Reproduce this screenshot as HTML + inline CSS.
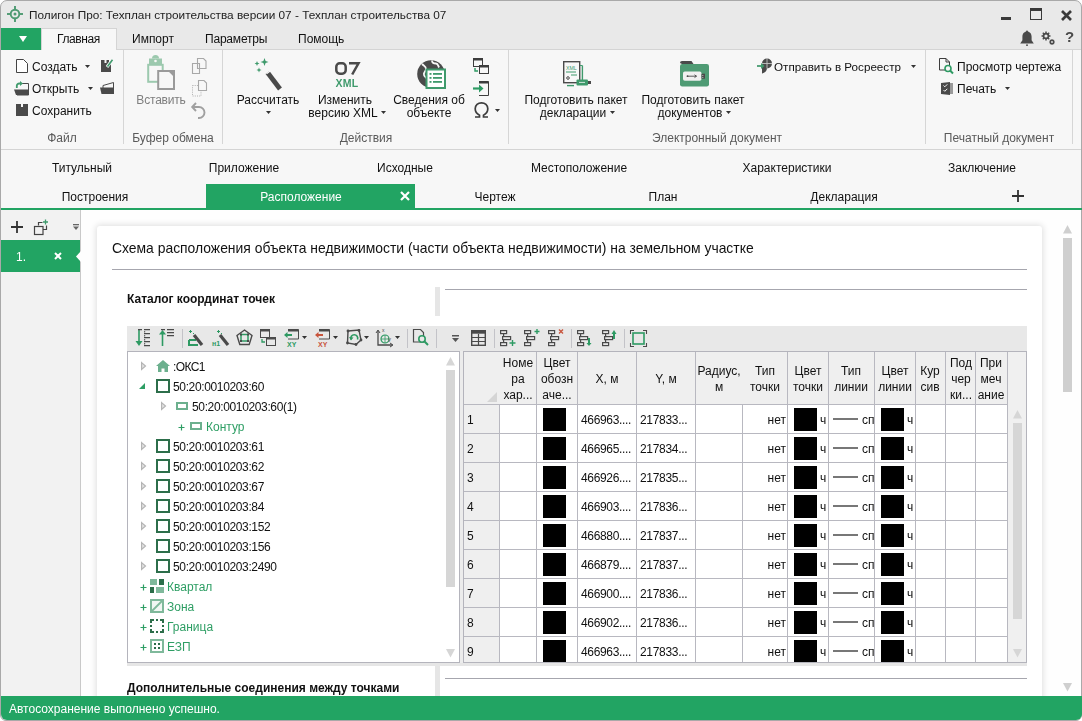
<!DOCTYPE html><html><head><meta charset="utf-8"><style>
*{margin:0;padding:0;box-sizing:border-box}
html,body{width:1082px;height:721px;overflow:hidden;background:#fff}
body{font-family:"Liberation Sans",sans-serif;font-size:12px;color:#111;position:relative}
.t{position:absolute;white-space:nowrap;line-height:16px;will-change:transform}
.c{transform:translateX(-50%)}
.g{color:#5a5a5a}
.b{font-weight:bold}
svg{overflow:visible}
</style></head><body>
<div style="position:absolute;left:0px;top:0px;width:1082px;height:721px;background:#fff"></div>
<div style="position:absolute;left:0px;top:0px;width:1082px;height:721px;background:#e9e9e9;border:1px solid #a9a9a9;border-radius:7px 7px 6px 6px;overflow:hidden"></div>
<div style="position:absolute;left:1px;top:49px;width:1080px;height:101px;background:#f7f7f7;border-top:1px solid #d4d4d4;border-bottom:1px solid #d4d4d4"></div>
<div style="position:absolute;left:1px;top:150px;width:1080px;height:58px;background:#f7f7f7"></div>
<div style="position:absolute;left:1px;top:208px;width:1081px;height:2px;background:#22a463"></div>
<div style="position:absolute;left:1px;top:210px;width:80px;height:486px;background:#f2f2f2;border-right:1px solid #c9c9c9"></div>
<div style="position:absolute;left:81px;top:210px;width:1000px;height:486px;background:#fefefe"></div>
<div style="position:absolute;left:97px;top:226px;width:945px;height:480px;background:#fff;border-radius:3px;box-shadow:0 0 6px 1px rgba(0,0,0,0.13)"></div>
<div style="position:absolute;left:1px;top:696px;width:1081px;height:24px;background:#22a463;border-radius:0 0 6px 6px"></div>
<svg style="position:absolute;left:7px;top:6px" width="16" height="16" viewBox="0 0 16 16"><g stroke="#4e9a72" stroke-width="1.9" fill="none"><circle cx="8" cy="8" r="4.3"/><line x1="8" y1="0" x2="8" y2="3.3"/><line x1="8" y1="12.7" x2="8" y2="16"/><line x1="0" y1="8" x2="3.3" y2="8"/><line x1="12.7" y1="8" x2="16" y2="8"/></g><circle cx="8" cy="8" r="1.5" fill="#4e9a72"/></svg>
<div class="t " style="left:29px;top:7px;font-size:11.8px;color:#222">Полигон Про: Техплан строительства версии 07 - Техплан строительства 07</div>
<div style="position:absolute;left:1001px;top:17px;width:10px;height:2.5px;background:#3a3a3a"></div>
<div style="position:absolute;left:1030px;top:8px;width:12px;height:12px;border:1.5px solid #3a3a3a;border-top-width:3px"></div>
<svg style="position:absolute;left:1061px;top:10px" width="11" height="11" viewBox="0 0 11 11"><path d="M1 1L10 10M10 1L1 10" stroke="#3a3a3a" stroke-width="2.7"/></svg>
<svg style="position:absolute;left:1019px;top:30px" width="16" height="16" viewBox="0 0 16 16"><path d="M8 1.5c-3 0-4.6 2.4-4.6 5.2v3.6L1.2 13.4h13.6L12.6 10.3V6.7C12.6 3.9 11 1.5 8 1.5z" fill="#4a4a4a"/><circle cx="8" cy="1.4" r="1" fill="#4a4a4a"/><rect x="7" y="14.5" width="2" height="1.3" fill="#4a4a4a"/></svg>
<svg style="position:absolute;left:1041px;top:31px" width="15" height="15" viewBox="0 0 15 15"><g fill="#4a4a4a"><circle cx="5" cy="5" r="3.3"/><g stroke="#4a4a4a" stroke-width="1.5"><path d="M5 0.5v9M0.5 5h9M1.8 1.8l6.4 6.4M8.2 1.8l-6.4 6.4"/></g><circle cx="11" cy="11" r="2.2"/><g stroke="#4a4a4a" stroke-width="1.1"><path d="M11 8v6M8 11h6M8.9 8.9l4.2 4.2M13.1 8.9l-4.2 4.2"/></g></g><circle cx="5" cy="5" r="1.6" fill="#e9e9e9"/><circle cx="11" cy="11" r="0.9" fill="#e9e9e9"/></svg>
<div class="t " style="left:1065px;top:29px;font-size:15px;font-weight:bold;color:#4a4a4a">?</div>
<div style="position:absolute;left:1px;top:28px;width:40px;height:22px;background:#22a463"></div>
<svg style="position:absolute;left:19px;top:36px" width="8" height="6" viewBox="0 0 8 6"><path d="M0 0H8L4 6z" fill="#fff"/></svg>
<div style="position:absolute;left:41px;top:28px;width:76px;height:22px;background:#f7f7f7;border:1px solid #d4d4d4;border-bottom:none"></div>
<div class="t " style="left:57px;top:31px;letter-spacing:-0.4px">Главная</div>
<div class="t " style="left:132px;top:31px;">Импорт</div>
<div class="t " style="left:205px;top:31px;letter-spacing:-0.2px">Параметры</div>
<div class="t " style="left:298px;top:31px;">Помощь</div>
<div style="position:absolute;left:123px;top:50px;width:1px;height:94px;background:#d6d6d6"></div>
<div style="position:absolute;left:222px;top:50px;width:1px;height:94px;background:#d6d6d6"></div>
<div style="position:absolute;left:508px;top:50px;width:1px;height:94px;background:#d6d6d6"></div>
<div style="position:absolute;left:925px;top:50px;width:1px;height:94px;background:#d6d6d6"></div>
<div style="position:absolute;left:1072px;top:50px;width:1px;height:94px;background:#d6d6d6"></div>
<div class="t g c" style="left:62px;top:130px;">Файл</div>
<div class="t g c" style="left:173px;top:130px;">Буфер обмена</div>
<div class="t g c" style="left:366px;top:130px;">Действия</div>
<div class="t g c" style="left:717px;top:130px;">Электронный документ</div>
<div class="t g c" style="left:999px;top:130px;">Печатный документ</div>
<svg style="position:absolute;left:15px;top:59px" width="14" height="14" viewBox="0 0 14 14"><path d="M1.5 0.5H8.5L12.5 4.5V13.5H1.5z" fill="#fff" stroke="#444"/></svg>
<div class="t " style="left:32px;top:59px;">Создать</div>
<svg style="position:absolute;left:85px;top:65px" width="5" height="3" viewBox="0 0 5 3"><path d="M0 0H5L2.5 3z" fill="#333"/></svg>
<svg style="position:absolute;left:101px;top:59px" width="12" height="13" viewBox="0 0 12 13"><path d="M0 1H8V4H10V13H0z" fill="#4a4a4a"/><rect x="3.5" y="1" width="2" height="3" fill="#f7f7f7"/><path d="M6 8L11.5 0.5" stroke="#f7f7f7" stroke-width="3"/><path d="M6.5 7.5L11.5 0.8" stroke="#3f9a6c" stroke-width="1.6"/></svg>
<svg style="position:absolute;left:14px;top:81px" width="15" height="14" viewBox="0 0 15 14"><path d="M7.5 2.5H14.5V14H3" fill="none" stroke="#4a4a4a" stroke-width="1"/><path d="M0 8.5H14.5V14H2z" fill="#4a4a4a"/><path d="M2.8 7V4.8Q2.8 2.5 5.5 2.5H7" stroke="#3f9a6c" stroke-width="1.8" fill="none"/><path d="M6 0L9 2.5L6 5z" fill="#3f9a6c"/></svg>
<div class="t " style="left:32px;top:81px;">Открыть</div>
<svg style="position:absolute;left:88px;top:87px" width="5" height="3" viewBox="0 0 5 3"><path d="M0 0H5L2.5 3z" fill="#333"/></svg>
<svg style="position:absolute;left:100px;top:82px" width="14" height="12" viewBox="0 0 14 12"><path d="M3 3.5L13.5 0.5V11.5H3z" fill="none" stroke="#4a4a4a"/><path d="M0 5.5H14V12H1.5z" fill="#4a4a4a"/></svg>
<svg style="position:absolute;left:16px;top:104px" width="12" height="12" viewBox="0 0 12 12"><path d="M0 0H12V12H0z" fill="#4a4a4a"/><rect x="5" y="0" width="2" height="3" fill="#f7f7f7"/></svg>
<div class="t " style="left:32px;top:103px;">Сохранить</div>
<svg style="position:absolute;left:146px;top:57px" width="30" height="34" viewBox="0 0 30 34"><rect x="2.2" y="7.8" width="14.5" height="17" fill="none" stroke="#9cc9ae" stroke-width="2"/><path d="M3 1.5H16V7.8H3z" fill="#9cc9ae"/><path d="M6 1.5a3.5 3.5 0 0 1 7 0z" fill="#9cc9ae"/><circle cx="9.5" cy="4" r="1.3" fill="#f7f7f7"/><path d="M12.2 14H23.5L28 18.5V32H12.2z" fill="#f7f7f7" stroke="#9a9a9a" stroke-width="2"/><path d="M23 13H29V19z" fill="#9a9a9a"/></svg>
<div class="t c" style="left:161px;top:92px;color:#7f7f7f;letter-spacing:-0.2px">Вставить</div>
<svg style="position:absolute;left:192px;top:58px" width="15" height="16" viewBox="0 0 15 16"><path d="M5.5 0.5H11.5L14 3V10.5H5.5z" fill="#f7f7f7" stroke="#a8a8a8" stroke-width="1.1"/><path d="M0.5 5.5H7.5V15.5H0.5z" fill="#f7f7f7" stroke="#a8a8a8" stroke-width="1.1"/><path d="M5.5 5.5V10.5H7.5" fill="none" stroke="#a8a8a8" stroke-width="1.1"/></svg>
<svg style="position:absolute;left:192px;top:80px" width="15" height="17" viewBox="0 0 15 17"><rect x="0.5" y="5.5" width="8.5" height="10.5" fill="none" stroke="#b0b0b0" stroke-width="1" stroke-dasharray="1 1.2"/><path d="M6.5 0.5H12L14.5 3V10.5H6.5z" fill="#f7f7f7" stroke="#a8a8a8" stroke-width="1.1"/></svg>
<svg style="position:absolute;left:191px;top:102px" width="16" height="16" viewBox="0 0 16 16"><path d="M5 1L1.2 5L5 9" fill="none" stroke="#a0a0a0" stroke-width="1.9"/><path d="M1.5 5H8a5.5 5.5 0 0 1 0 11H7" fill="none" stroke="#a0a0a0" stroke-width="1.9"/></svg>
<svg style="position:absolute;left:254px;top:58px" width="30" height="33" viewBox="0 0 30 33"><g fill="#3f9a6c"><path d="M10.5 0L11.6 2.9L14.5 4L11.6 5.1L10.5 8L9.4 5.1L6.5 4L9.4 2.9z"/><path d="M3 3L3.7 4.8L5.5 5.5L3.7 6.2L3 8L2.3 6.2L0.5 5.5L2.3 4.8z"/><path d="M5 9.5L5.7 11.3L7.5 12L5.7 12.7L5 14.5L4.3 12.7L2.5 12L4.3 11.3z"/></g><path d="M13.5 14.5L26 31" stroke="#4a4a4a" stroke-width="4.8"/><path d="M12.5 15.8L16.5 12.8" stroke="#f7f7f7" stroke-width="1.3"/></svg>
<div class="t c" style="left:268px;top:92px;">Рассчитать</div>
<svg style="position:absolute;left:266px;top:111px" width="5" height="3" viewBox="0 0 5 3"><path d="M0 0H5L2.5 3z" fill="#333"/></svg>
<svg style="position:absolute;left:335px;top:62px" width="25" height="13" viewBox="0 0 25 13"><rect x="1.3" y="1.3" width="9.4" height="10.4" rx="3.4" fill="none" stroke="#4a4a4a" stroke-width="2.5"/><path d="M14 1.3H23.5L17.2 12.5" fill="none" stroke="#4a4a4a" stroke-width="2.5"/></svg>
<div class="t c" style="left:347px;top:78px;font-size:10.5px;font-weight:bold;color:#3f9a6c;line-height:11px;letter-spacing:0.3px">XML</div>
<div class="t c" style="left:345px;top:92px;">Изменить</div>
<div class="t c" style="left:342.5px;top:105px;">версию XML</div>
<svg style="position:absolute;left:381px;top:111px" width="5" height="3" viewBox="0 0 5 3"><path d="M0 0H5L2.5 3z" fill="#333"/></svg>
<svg style="position:absolute;left:417px;top:60px" width="29" height="29" viewBox="0 0 29 29"><circle cx="14" cy="14" r="13.8" fill="#4a4a4a"/><path d="M5 4c2 2 4 2 4 5s-3 3-2 6 3 2 3 5M15 0.5c0 2 2 3 4 3s2 2 3 4" stroke="#f7f7f7" stroke-width="1.8" fill="none"/><rect x="9.5" y="9.5" width="18.5" height="18.5" fill="#fff" stroke="#3f9a6c" stroke-width="2"/><g fill="#3f9a6c"><rect x="12.5" y="13" width="2" height="1.8"/><rect x="16" y="13" width="9" height="1.8"/><rect x="12.5" y="17" width="2" height="1.8"/><rect x="16" y="17" width="9" height="1.8"/><rect x="12.5" y="21" width="2" height="1.8"/><rect x="16" y="21" width="9" height="1.8"/></g></svg>
<div class="t c" style="left:429px;top:92px;">Сведения об</div>
<div class="t c" style="left:429px;top:105px;">объекте</div>
<svg style="position:absolute;left:473px;top:58px" width="16" height="16" viewBox="0 0 16 16"><rect x="0.5" y="0.5" width="9" height="8" fill="none" stroke="#3d3d3d"/><rect x="0.5" y="0.5" width="9" height="2" fill="#3d3d3d"/><rect x="6.5" y="7.5" width="9" height="8" fill="#f7f7f7" stroke="#3d3d3d"/><rect x="6.5" y="7.5" width="9" height="2" fill="#3d3d3d"/><path d="M2 10v3h3" stroke="#2e9a63" stroke-width="1.4" fill="none"/></svg>
<svg style="position:absolute;left:473px;top:81px" width="16" height="15" viewBox="0 0 16 15"><path d="M6 0.5H15.5V14.5H6" fill="none" stroke="#3d3d3d"/><rect x="6" y="0.5" width="9.5" height="2" fill="#3d3d3d"/><path d="M0 7.5H7" stroke="#2e9a63" stroke-width="2.2"/><path d="M6 3.5L10.5 7.5L6 11.5z" fill="#2e9a63"/></svg>
<svg style="position:absolute;left:474px;top:102px" width="15" height="16" viewBox="0 0 15 16"><path d="M1 15H5.5V13.2C2.8 11.8 1.2 9.4 1.2 6.8 1.2 3.2 4 0.8 7.5 0.8S13.8 3.2 13.8 6.8C13.8 9.4 12.2 11.8 9.5 13.2V15H14" fill="none" stroke="#3d3d3d" stroke-width="1.7"/></svg>
<svg style="position:absolute;left:495px;top:109px" width="5" height="3" viewBox="0 0 5 3"><path d="M0 0H5L2.5 3z" fill="#333"/></svg>
<svg style="position:absolute;left:562px;top:60px" width="30" height="28" viewBox="0 0 30 28"><rect x="1.7" y="1.7" width="16" height="21" fill="#f7f7f7" stroke="#4a4a4a" stroke-width="1.4"/><path d="M20.4 5.5V23" stroke="#3f9a6c" stroke-width="1.4"/><path d="M18 5.5H20.4" stroke="#3f9a6c" stroke-width="1"/><path d="M5 25.6H12" stroke="#3f9a6c" stroke-width="1.4"/><text x="4" y="9.6" font-size="5.2" fill="#3f9a6c" font-family="Liberation Sans">XML</text><path d="M4 12H14M9 15H15" stroke="#3f9a6c" stroke-width="1"/><circle cx="6" cy="18" r="1.3" fill="none" stroke="#4a4a4a" stroke-width="1"/><rect x="14.5" y="19.4" width="11.5" height="6" rx="1" fill="#3f9a6c"/><rect x="26" y="21" width="3" height="3" fill="#4a4a4a"/><path d="M17 22.4h6" stroke="#f7f7f7" stroke-width="0.8"/></svg>
<div class="t c" style="left:576px;top:92px;">Подготовить пакет</div>
<div class="t c" style="left:573px;top:105px;">декларации</div>
<svg style="position:absolute;left:610px;top:111px" width="5" height="3" viewBox="0 0 5 3"><path d="M0 0H5L2.5 3z" fill="#333"/></svg>
<svg style="position:absolute;left:680px;top:61px" width="29" height="26" viewBox="0 0 29 26"><path d="M0 2a2 2 0 0 1 2-2h9.5l2 3H2z" fill="#4a4a4a"/><rect x="0" y="3" width="29" height="22.4" rx="2.2" fill="#4f9b74"/><rect x="3" y="10.5" width="18.5" height="9.3" rx="1.8" fill="#f0f0f0"/><rect x="21.5" y="12.7" width="3.5" height="5" fill="#4a4a4a"/><path d="M22.8 14v0.8M22.8 16v0.8" stroke="#f0f0f0" stroke-width="0.9"/><path d="M7.5 15.2h9M14.5 13.8l2 1.4-2 1.4" stroke="#4a4a4a" stroke-width="0.9" fill="none"/><circle cx="7.5" cy="15.2" r="0.9" fill="#4a4a4a"/></svg>
<div class="t c" style="left:693px;top:92px;">Подготовить пакет</div>
<div class="t c" style="left:690px;top:105px;">документов</div>
<svg style="position:absolute;left:726px;top:111px" width="5" height="3" viewBox="0 0 5 3"><path d="M0 0H5L2.5 3z" fill="#333"/></svg>
<svg style="position:absolute;left:756px;top:58px" width="17" height="17" viewBox="0 0 17 17"><path d="M6 5.5A5 5 0 1 1 11 10.5Q10.5 14.5 6 15.5z" fill="#4a4a4a"/><path d="M11 0.5V10.5M6 5.5H16" stroke="#f7f7f7" stroke-width="0.9" opacity="0.7"/><path d="M1 8H6" stroke="#5aa57f" stroke-width="2"/><path d="M5 5L8.5 8L5 11z" fill="#3f9a6c"/></svg>
<div class="t " style="left:774px;top:59px;font-size:11.65px">Отправить в Росреестр</div>
<svg style="position:absolute;left:911px;top:65px" width="5" height="3" viewBox="0 0 5 3"><path d="M0 0H5L2.5 3z" fill="#333"/></svg>
<svg style="position:absolute;left:939px;top:58px" width="15" height="16" viewBox="0 0 15 16"><path d="M0.5 0.5H7L10.5 4V12H0.5z" fill="none" stroke="#3d3d3d"/><path d="M7 0.5V4H10.5" fill="none" stroke="#3d3d3d"/><circle cx="9" cy="10.5" r="3" fill="#f7f7f7" stroke="#2e9a63" stroke-width="1.6"/><path d="M11 12.5L14 15.5" stroke="#2e9a63" stroke-width="2"/></svg>
<div class="t " style="left:957px;top:59px;">Просмотр чертежа</div>
<svg style="position:absolute;left:941px;top:82px" width="13" height="13" viewBox="0 0 13 13"><path d="M0 1L9 0V13L0 12z" fill="#4a4a4a"/><rect x="9" y="1" width="3" height="11" fill="#9a9a9a"/><path d="M2.5 3.5l1.3 1.3 2.5-2.5M2.5 8l1.3 1.3 2.5-2.5" stroke="#f7f7f7" stroke-width="1" fill="none"/></svg>
<div class="t " style="left:957px;top:81px;">Печать</div>
<svg style="position:absolute;left:1005px;top:87px" width="5" height="3" viewBox="0 0 5 3"><path d="M0 0H5L2.5 3z" fill="#333"/></svg>
<div style="position:absolute;left:206px;top:184px;width:209px;height:24px;background:#22a463"></div>
<div class="t c" style="left:81.5px;top:160px;">Титульный</div>
<div class="t c" style="left:243.5px;top:160px;">Приложение</div>
<div class="t c" style="left:405px;top:160px;">Исходные</div>
<div class="t c" style="left:579px;top:160px;">Местоположение</div>
<div class="t c" style="left:787px;top:160px;">Характеристики</div>
<div class="t c" style="left:982px;top:160px;">Заключение</div>
<div class="t c" style="left:94.5px;top:189px;">Построения</div>
<div class="t c" style="left:663px;top:189px;">План</div>
<div class="t c" style="left:844px;top:189px;">Декларация</div>
<div class="t c" style="left:494.5px;top:189px;">Чертеж</div>
<div class="t c" style="left:300.5px;top:189px;color:#fff">Расположение</div>
<svg style="position:absolute;left:400px;top:191px" width="10" height="10" viewBox="0 0 10 10"><path d="M1 1L9 9M9 1L1 9" stroke="#fff" stroke-width="2.2"/></svg>
<svg style="position:absolute;left:1012px;top:190px" width="12" height="12" viewBox="0 0 12 12"><path d="M6 0V12M0 6H12" stroke="#333" stroke-width="1.8"/></svg>
<svg style="position:absolute;left:11px;top:221px" width="12" height="12" viewBox="0 0 12 12"><path d="M6 0V12M0 6H12" stroke="#333" stroke-width="1.8"/></svg>
<svg style="position:absolute;left:33px;top:219px" width="16" height="16" viewBox="0 0 16 16"><path d="M5.5 6.5V3.5H9.5M13.5 6.5V10.5H10" fill="none" stroke="#444" stroke-width="1.2"/><rect x="1.5" y="7.5" width="8.5" height="8" fill="#f2f2f2" stroke="#444" stroke-width="1.2"/><path d="M12.5 0.5V5.5M10 3H15" stroke="#3f9a6c" stroke-width="1.3"/></svg>
<svg style="position:absolute;left:73px;top:224px" width="6" height="6" viewBox="0 0 6 6"><rect x="0" y="0" width="6" height="1.3" fill="#666"/><path d="M0 2.5H6L3 6z" fill="#666"/></svg>
<div style="position:absolute;left:1px;top:240px;width:79px;height:32px;background:#22a463"></div>
<svg style="position:absolute;left:76px;top:251px" width="5" height="11" viewBox="0 0 5 11"><path d="M5 0V11L0 5.5z" fill="#fefefe"/></svg>
<div class="t " style="left:16px;top:249px;color:#fff">1.</div>
<svg style="position:absolute;left:54px;top:252px" width="8" height="8" viewBox="0 0 8 8"><path d="M1 1L7 7M7 1L1 7" stroke="#fff" stroke-width="2"/></svg>
<svg style="position:absolute;left:1063px;top:225px" width="9" height="9" viewBox="0 0 9 9"><path d="M4.5 0L9 8.5H0z" fill="#cfcfcf"/></svg>
<div style="position:absolute;left:1063px;top:238px;width:9px;height:154px;background:#cfcfcf"></div>
<svg style="position:absolute;left:1063px;top:683px" width="9" height="9" viewBox="0 0 9 9"><path d="M0 0H9L4.5 8.5z" fill="#cfcfcf"/></svg>
<div class="t " style="left:112px;top:240px;font-size:13.9px;line-height:16px">Схема расположения объекта недвижимости (части объекта недвижимости) на земельном участке</div>
<div style="position:absolute;left:112px;top:269px;width:915px;height:1px;background:#a6a6ae"></div>
<div class="t b" style="left:127px;top:291px;font-size:12px">Каталог координат точек</div>
<div style="position:absolute;left:435px;top:287px;width:5px;height:29px;background:#e6e6e6"></div>
<div style="position:absolute;left:445px;top:289px;width:582px;height:1px;background:#a6a6ae"></div>
<div style="position:absolute;left:127px;top:326px;width:900px;height:25px;background:#e8e8e8"></div>
<div style="position:absolute;left:182px;top:329px;width:1px;height:19px;background:#c3c3c8"></div>
<div style="position:absolute;left:407px;top:329px;width:1px;height:19px;background:#c3c3c8"></div>
<div style="position:absolute;left:436px;top:329px;width:1px;height:19px;background:#c3c3c8"></div>
<div style="position:absolute;left:494px;top:329px;width:1px;height:19px;background:#c3c3c8"></div>
<div style="position:absolute;left:571px;top:329px;width:1px;height:19px;background:#c3c3c8"></div>
<div style="position:absolute;left:624px;top:329px;width:1px;height:19px;background:#c3c3c8"></div>
<svg style="position:absolute;left:135px;top:329px" width="16" height="18" viewBox="0 0 16 18"><path d="M4 1V15" stroke="#2e9a63" stroke-width="1.6"/><path d="M0.5 12L4 17L7.5 12z" fill="#2e9a63"/><g stroke="#4a4a4a" stroke-width="1.2"><path d="M3 0.6H7M9 0.6H15M9 4.6H15M9 8.6H15M9 12.6H15M9 16.6H15"/></g><g fill="#4a4a4a"><rect x="9" y="2.2" width="1.2" height="1.2"/><rect x="9" y="6.2" width="1.2" height="1.2"/><rect x="9" y="10.2" width="1.2" height="1.2"/><rect x="9" y="14.2" width="1.2" height="1.2"/></g></svg>
<svg style="position:absolute;left:160px;top:329px" width="15" height="18" viewBox="0 0 15 18"><path d="M2.5 3V17" stroke="#2e9a63" stroke-width="1.6"/><path d="M-1 5.5L2.5 1L6 5.5z" fill="#2e9a63"/><g stroke="#4a4a4a" stroke-width="1.2"><path d="M1 0.6H5M7 0.6H14M7 3.6H14M7 6.6H14"/></g></svg>
<svg style="position:absolute;left:188px;top:329px" width="15" height="18" viewBox="0 0 15 18"><g fill="#2e9a63"><rect x="2" y="1" width="1" height="3"/><rect x="1" y="2" width="3" height="1"/><rect x="5" y="4" width="1" height="1"/></g><path d="M1 11H8M1 11V16H10" stroke="#2e9a63" stroke-width="2" fill="none"/><path d="M6 6L14 16" stroke="#4a4a4a" stroke-width="3.2"/></svg>
<svg style="position:absolute;left:212px;top:329px" width="17" height="18" viewBox="0 0 17 18"><g fill="#2e9a63"><rect x="6" y="1" width="1" height="3"/><rect x="5" y="2" width="3" height="1"/><rect x="9" y="4" width="1" height="1"/></g><text x="0" y="17" font-size="7" font-weight="bold" fill="#2e9a63" font-family="Liberation Sans">н1</text><path d="M8 6L16 16" stroke="#4a4a4a" stroke-width="3.2"/></svg>
<svg style="position:absolute;left:236px;top:329px" width="17" height="17" viewBox="0 0 17 17"><path d="M8.5 1L16 6.5L13.2 15.5H3.8L1 6.5z" fill="none" stroke="#4a4a4a" stroke-width="1.4"/><rect x="5" y="5.5" width="7" height="6.5" fill="none" stroke="#2e9a63" stroke-width="1.5"/><g fill="#4a4a4a"><rect x="4" y="4.5" width="2" height="2"/><rect x="11" y="4.5" width="2" height="2"/><rect x="4" y="11" width="2" height="2"/><rect x="11" y="11" width="2" height="2"/></g></svg>
<svg style="position:absolute;left:260px;top:329px" width="16" height="17" viewBox="0 0 16 17"><rect x="0.5" y="0.5" width="9" height="8" fill="none" stroke="#4a4a4a"/><rect x="0.5" y="0.5" width="9" height="2" fill="#4a4a4a"/><rect x="6.5" y="8.5" width="9" height="8" fill="#e8e8e8" stroke="#4a4a4a"/><rect x="6.5" y="8.5" width="9" height="2" fill="#4a4a4a"/><path d="M2 10v3h3" stroke="#2e9a63" stroke-width="1.3" fill="none"/></svg>
<svg style="position:absolute;left:284px;top:329px" width="15" height="18" viewBox="0 0 15 18"><path d="M4 0.5H14.5V10H4" fill="none" stroke="#4a4a4a"/><rect x="4" y="0.5" width="10.5" height="2" fill="#4a4a4a"/><path d="M1 6H8" stroke="#2e9a63" stroke-width="2"/><path d="M3.5 3L0 6L3.5 9z" fill="#2e9a63"/><text x="3" y="17.5" font-size="7" font-weight="bold" fill="#2e9a63" font-family="Liberation Sans">XY</text></svg>
<svg style="position:absolute;left:302px;top:336px" width="5" height="3" viewBox="0 0 5 3"><path d="M0 0H5L2.5 3z" fill="#333"/></svg>
<svg style="position:absolute;left:315px;top:329px" width="15" height="18" viewBox="0 0 15 18"><path d="M4 0.5H14.5V10H4" fill="none" stroke="#4a4a4a"/><rect x="4" y="0.5" width="10.5" height="2" fill="#4a4a4a"/><path d="M1 6H8" stroke="#c8553d" stroke-width="2"/><path d="M3.5 3L0 6L3.5 9z" fill="#c8553d"/><text x="3" y="17.5" font-size="7" font-weight="bold" fill="#c8553d" font-family="Liberation Sans">XY</text></svg>
<svg style="position:absolute;left:333px;top:336px" width="5" height="3" viewBox="0 0 5 3"><path d="M0 0H5L2.5 3z" fill="#333"/></svg>
<svg style="position:absolute;left:346px;top:329px" width="16" height="17" viewBox="0 0 16 17"><path d="M2 2L13 1L15 11L10 15.5L1.5 14z" fill="none" stroke="#4a4a4a" stroke-width="1.4"/><g fill="#4a4a4a"><circle cx="2" cy="2" r="1.4"/><circle cx="13" cy="1.5" r="1.4"/><circle cx="15" cy="11" r="1.4"/><circle cx="10" cy="15.5" r="1.4"/><circle cx="1.5" cy="14" r="1.4"/></g><path d="M5 10.5a3.5 3.5 0 1 1 6.5 0" stroke="#2e9a63" stroke-width="1.6" fill="none"/><path d="M3 8L5 11.5L7.5 8.5z" fill="#2e9a63"/></svg>
<svg style="position:absolute;left:364px;top:336px" width="5" height="3" viewBox="0 0 5 3"><path d="M0 0H5L2.5 3z" fill="#333"/></svg>
<svg style="position:absolute;left:376px;top:329px" width="18" height="18" viewBox="0 0 18 18"><path d="M2 2V16H16" stroke="#4a4a4a" stroke-width="1.3" fill="none"/><path d="M0 4L2 1L4 4M14 14L17 16L14 18" stroke="#4a4a4a" fill="none"/><circle cx="9" cy="10" r="4" fill="none" stroke="#2e9a63" stroke-width="1.2"/><path d="M5 10H13M9 6V14" stroke="#2e9a63" stroke-width="0.8"/><text x="12" y="12" font-size="6" fill="#4a4a4a" font-family="Liberation Sans">y</text><text x="6" y="3" font-size="5" fill="#4a4a4a" font-family="Liberation Sans">x</text></svg>
<svg style="position:absolute;left:395px;top:336px" width="5" height="3" viewBox="0 0 5 3"><path d="M0 0H5L2.5 3z" fill="#333"/></svg>
<svg style="position:absolute;left:413px;top:329px" width="16" height="17" viewBox="0 0 16 17"><path d="M0.5 0.5H7.5L10.5 3.5V13H0.5z" fill="none" stroke="#4a4a4a" stroke-width="1.2"/><circle cx="9" cy="10" r="3.2" fill="#e8e8e8" stroke="#2e9a63" stroke-width="1.6"/><path d="M11.3 12.3L15 16" stroke="#2e9a63" stroke-width="2"/></svg>
<svg style="position:absolute;left:452px;top:335px" width="7" height="7" viewBox="0 0 7 7"><rect x="0" y="0" width="7" height="1.5" fill="#555"/><path d="M0 3H7L3.5 7z" fill="#555"/></svg>
<svg style="position:absolute;left:471px;top:330px" width="15" height="16" viewBox="0 0 15 16"><rect x="0.7" y="0.7" width="13.6" height="14.6" fill="none" stroke="#4a4a4a" stroke-width="1.4"/><rect x="0.7" y="0.7" width="13.6" height="3" fill="#4a4a4a"/><path d="M1 7.5H14M1 11.5H14M7.5 4V15" stroke="#4a4a4a" stroke-width="1.2"/></svg>
<svg style="position:absolute;left:500px;top:329px" width="16" height="18" viewBox="0 0 16 18"><g fill="none" stroke="#4a4a4a" stroke-width="1.2"><rect x="0.6" y="1.6" width="6" height="3"/><path d="M3.6 4.6V7.6"/><rect x="2.6" y="7.6" width="8" height="3"/><path d="M3.6 10.6V13.6"/><rect x="0.6" y="13.6" width="6" height="3"/></g><path d="M12.5 11V17M9.5 14H15.5" stroke="#2e9a63" stroke-width="1.4"/></svg>
<svg style="position:absolute;left:524px;top:329px" width="16" height="18" viewBox="0 0 16 18"><g fill="none" stroke="#4a4a4a" stroke-width="1.2"><rect x="0.6" y="1.6" width="6" height="3"/><path d="M3.6 4.6V7.6"/><rect x="2.6" y="7.6" width="8" height="3"/><path d="M3.6 10.6V13.6"/><rect x="0.6" y="13.6" width="6" height="3"/></g><path d="M13 0V5M10.5 2.5H15.5" stroke="#2e9a63" stroke-width="1.4"/></svg>
<svg style="position:absolute;left:548px;top:329px" width="16" height="18" viewBox="0 0 16 18"><g fill="none" stroke="#4a4a4a" stroke-width="1.2"><rect x="0.6" y="1.6" width="6" height="3"/><path d="M3.6 4.6V7.6"/><rect x="2.6" y="7.6" width="8" height="3"/><path d="M3.6 10.6V13.6"/><rect x="0.6" y="13.6" width="6" height="3"/></g><path d="M11 0.5L15 4.5M15 0.5L11 4.5" stroke="#c8553d" stroke-width="1.4"/></svg>
<svg style="position:absolute;left:577px;top:329px" width="16" height="18" viewBox="0 0 16 18"><g fill="none" stroke="#4a4a4a" stroke-width="1.2"><rect x="0.6" y="1.6" width="6" height="3"/><path d="M3.6 4.6V7.6"/><rect x="2.6" y="7.6" width="8" height="3"/><path d="M3.6 10.6V13.6"/><rect x="0.6" y="13.6" width="6" height="3"/></g><path d="M12 9V15" stroke="#2e9a63" stroke-width="2"/><path d="M9.5 14H14.5L12 17z" fill="#2e9a63"/></svg>
<svg style="position:absolute;left:602px;top:329px" width="16" height="18" viewBox="0 0 16 18"><g fill="none" stroke="#4a4a4a" stroke-width="1.2"><rect x="0.6" y="1.6" width="6" height="3"/><path d="M3.6 4.6V7.6"/><rect x="2.6" y="7.6" width="8" height="3"/><path d="M3.6 10.6V13.6"/><rect x="0.6" y="13.6" width="6" height="3"/></g><path d="M12 4V10" stroke="#2e9a63" stroke-width="2"/><path d="M9.5 5H14.5L12 1z" fill="#2e9a63"/></svg>
<svg style="position:absolute;left:630px;top:330px" width="17" height="17" viewBox="0 0 17 17"><path d="M0.5 4V0.5H4M13 0.5H16.5V4M16.5 13V16.5H13M4 16.5H0.5V13" fill="none" stroke="#4a4a4a" stroke-width="1.1"/><rect x="3" y="3" width="11" height="11" fill="none" stroke="#2e9a63" stroke-width="1.6"/></svg>
<div style="position:absolute;left:127px;top:351px;width:333px;height:312px;background:#fff;border:1px solid #b4b4bc"></div>
<div style="position:absolute;left:127px;top:663px;width:900px;height:3px;background:#e6e6e6"></div>
<svg style="position:absolute;left:446px;top:357px" width="9" height="9" viewBox="0 0 9 9"><path d="M4.5 0L9 8.5H0z" fill="#d6d6d6"/></svg>
<div style="position:absolute;left:446px;top:370px;width:9px;height:217px;background:#d6d6d6"></div>
<svg style="position:absolute;left:446px;top:649px" width="9" height="9" viewBox="0 0 9 9"><path d="M0 0H9L4.5 8.5z" fill="#d6d6d6"/></svg>
<svg style="position:absolute;left:141px;top:362px" width="5" height="8" viewBox="0 0 5 8"><path d="M0.6 0.6L4.5 4L0.6 7.4z" fill="#e4e4e4" stroke="#b4b4b4" stroke-width="1.2"/></svg>
<svg style="position:absolute;left:156px;top:360px" width="14" height="12" viewBox="0 0 14 12"><path d="M7 0L14 6H12V12H8.5V8.5H5.5V12H2V6H0z" fill="#6cb08e"/></svg>
<div class="t " style="left:173px;top:359px;letter-spacing:-0.6px">:ОКС1</div>
<svg style="position:absolute;left:139px;top:383px" width="6" height="6" viewBox="0 0 6 6"><path d="M6 0V6H0z" fill="#2e9e64"/></svg>
<svg style="position:absolute;left:156px;top:379px" width="14" height="14" viewBox="0 0 14 14"><rect x="1" y="1" width="12" height="12" fill="none" stroke="#2c6e4a" stroke-width="2"/></svg>
<div class="t " style="left:173px;top:379px;letter-spacing:-0.36px">50:20:0010203:60</div>
<svg style="position:absolute;left:161px;top:402px" width="5" height="8" viewBox="0 0 5 8"><path d="M0.6 0.6L4.5 4L0.6 7.4z" fill="#e4e4e4" stroke="#b4b4b4" stroke-width="1.2"/></svg>
<svg style="position:absolute;left:176px;top:402px" width="12" height="8" viewBox="0 0 12 8"><rect x="1" y="1" width="10" height="6" fill="none" stroke="#6cb08e" stroke-width="2"/></svg>
<div class="t " style="left:192px;top:399px;letter-spacing:-0.36px">50:20:0010203:60(1)</div>
<svg style="position:absolute;left:178px;top:424px" width="7" height="7" viewBox="0 0 7 7"><path d="M3.5 0.5V6.5M0.5 3.5H6.5" stroke="#2e9e64" stroke-width="1.2"/></svg>
<svg style="position:absolute;left:190px;top:422px" width="12" height="8" viewBox="0 0 12 8"><rect x="1" y="1" width="10" height="6" fill="none" stroke="#6cb08e" stroke-width="2"/></svg>
<div class="t " style="left:206px;top:419px;color:#2e9e64">Контур</div>
<svg style="position:absolute;left:141px;top:442px" width="5" height="8" viewBox="0 0 5 8"><path d="M0.6 0.6L4.5 4L0.6 7.4z" fill="#e4e4e4" stroke="#b4b4b4" stroke-width="1.2"/></svg>
<svg style="position:absolute;left:156px;top:439px" width="14" height="14" viewBox="0 0 14 14"><rect x="1" y="1" width="12" height="12" fill="none" stroke="#2c6e4a" stroke-width="2"/></svg>
<div class="t " style="left:173px;top:439px;letter-spacing:-0.36px">50:20:0010203:61</div>
<svg style="position:absolute;left:141px;top:462px" width="5" height="8" viewBox="0 0 5 8"><path d="M0.6 0.6L4.5 4L0.6 7.4z" fill="#e4e4e4" stroke="#b4b4b4" stroke-width="1.2"/></svg>
<svg style="position:absolute;left:156px;top:459px" width="14" height="14" viewBox="0 0 14 14"><rect x="1" y="1" width="12" height="12" fill="none" stroke="#2c6e4a" stroke-width="2"/></svg>
<div class="t " style="left:173px;top:459px;letter-spacing:-0.36px">50:20:0010203:62</div>
<svg style="position:absolute;left:141px;top:482px" width="5" height="8" viewBox="0 0 5 8"><path d="M0.6 0.6L4.5 4L0.6 7.4z" fill="#e4e4e4" stroke="#b4b4b4" stroke-width="1.2"/></svg>
<svg style="position:absolute;left:156px;top:479px" width="14" height="14" viewBox="0 0 14 14"><rect x="1" y="1" width="12" height="12" fill="none" stroke="#2c6e4a" stroke-width="2"/></svg>
<div class="t " style="left:173px;top:479px;letter-spacing:-0.36px">50:20:0010203:67</div>
<svg style="position:absolute;left:141px;top:502px" width="5" height="8" viewBox="0 0 5 8"><path d="M0.6 0.6L4.5 4L0.6 7.4z" fill="#e4e4e4" stroke="#b4b4b4" stroke-width="1.2"/></svg>
<svg style="position:absolute;left:156px;top:499px" width="14" height="14" viewBox="0 0 14 14"><rect x="1" y="1" width="12" height="12" fill="none" stroke="#2c6e4a" stroke-width="2"/></svg>
<div class="t " style="left:173px;top:499px;letter-spacing:-0.36px">50:20:0010203:84</div>
<svg style="position:absolute;left:141px;top:522px" width="5" height="8" viewBox="0 0 5 8"><path d="M0.6 0.6L4.5 4L0.6 7.4z" fill="#e4e4e4" stroke="#b4b4b4" stroke-width="1.2"/></svg>
<svg style="position:absolute;left:156px;top:519px" width="14" height="14" viewBox="0 0 14 14"><rect x="1" y="1" width="12" height="12" fill="none" stroke="#2c6e4a" stroke-width="2"/></svg>
<div class="t " style="left:173px;top:519px;letter-spacing:-0.36px">50:20:0010203:152</div>
<svg style="position:absolute;left:141px;top:542px" width="5" height="8" viewBox="0 0 5 8"><path d="M0.6 0.6L4.5 4L0.6 7.4z" fill="#e4e4e4" stroke="#b4b4b4" stroke-width="1.2"/></svg>
<svg style="position:absolute;left:156px;top:539px" width="14" height="14" viewBox="0 0 14 14"><rect x="1" y="1" width="12" height="12" fill="none" stroke="#2c6e4a" stroke-width="2"/></svg>
<div class="t " style="left:173px;top:539px;letter-spacing:-0.36px">50:20:0010203:156</div>
<svg style="position:absolute;left:141px;top:562px" width="5" height="8" viewBox="0 0 5 8"><path d="M0.6 0.6L4.5 4L0.6 7.4z" fill="#e4e4e4" stroke="#b4b4b4" stroke-width="1.2"/></svg>
<svg style="position:absolute;left:156px;top:559px" width="14" height="14" viewBox="0 0 14 14"><rect x="1" y="1" width="12" height="12" fill="none" stroke="#2c6e4a" stroke-width="2"/></svg>
<div class="t " style="left:173px;top:559px;letter-spacing:-0.36px">50:20:0010203:2490</div>
<svg style="position:absolute;left:140px;top:584px" width="7" height="7" viewBox="0 0 7 7"><path d="M3.5 0.5V6.5M0.5 3.5H6.5" stroke="#2e9e64" stroke-width="1.2"/></svg>
<svg style="position:absolute;left:150px;top:579px" width="14" height="14" viewBox="0 0 14 14"><rect x="0" y="0" width="7" height="6" fill="#7fb99b"/><rect x="9" y="0" width="5" height="6" fill="#2c6e4a"/><rect x="0" y="8" width="4" height="6" fill="#2c6e4a"/><rect x="6" y="8" width="8" height="6" fill="#7fb99b"/></svg>
<div class="t " style="left:167px;top:579px;color:#2e9e64">Квартал</div>
<svg style="position:absolute;left:140px;top:604px" width="7" height="7" viewBox="0 0 7 7"><path d="M3.5 0.5V6.5M0.5 3.5H6.5" stroke="#2e9e64" stroke-width="1.2"/></svg>
<svg style="position:absolute;left:150px;top:599px" width="14" height="14" viewBox="0 0 14 14"><rect x="1" y="1" width="12" height="12" fill="#f0f7f3" stroke="#7fb99b" stroke-width="2"/><path d="M2 12L12 2" stroke="#7fb99b" stroke-width="1.8"/></svg>
<div class="t " style="left:167px;top:599px;color:#2e9e64">Зона</div>
<svg style="position:absolute;left:140px;top:624px" width="7" height="7" viewBox="0 0 7 7"><path d="M3.5 0.5V6.5M0.5 3.5H6.5" stroke="#2e9e64" stroke-width="1.2"/></svg>
<svg style="position:absolute;left:150px;top:619px" width="14" height="14" viewBox="0 0 14 14"><g fill="#2c6e4a"><path d="M0 0H4V2H2V4H0z"/><path d="M14 0H10V2H12V4H14z"/><path d="M0 14H4V12H2V10H0z"/><path d="M14 14H10V12H12V10H14z"/><rect x="6" y="0" width="2" height="2"/><rect x="6" y="12" width="2" height="2"/><rect x="0" y="6" width="2" height="2"/><rect x="12" y="6" width="2" height="2"/></g></svg>
<div class="t " style="left:167px;top:619px;color:#2e9e64">Граница</div>
<svg style="position:absolute;left:140px;top:644px" width="7" height="7" viewBox="0 0 7 7"><path d="M3.5 0.5V6.5M0.5 3.5H6.5" stroke="#2e9e64" stroke-width="1.2"/></svg>
<svg style="position:absolute;left:150px;top:639px" width="14" height="14" viewBox="0 0 14 14"><rect x="1" y="1" width="12" height="12" fill="none" stroke="#7fb99b" stroke-width="2"/><g fill="#2c6e4a"><rect x="4" y="4" width="2" height="2"/><rect x="8" y="4" width="2" height="2"/><rect x="4" y="8" width="2" height="2"/><rect x="8" y="8" width="2" height="2"/></g></svg>
<div class="t " style="left:167px;top:639px;color:#2e9e64">ЕЗП</div>
<div style="position:absolute;left:460px;top:351px;width:3px;height:312px;background:#ececec"></div>
<div style="position:absolute;left:463px;top:351px;width:564px;height:312px;background:#fff;border:1px solid #b4b4bc"></div>
<div style="position:absolute;left:464px;top:352px;width:543px;height:53px;background:#efefef"></div>
<div style="position:absolute;left:1007px;top:352px;width:19px;height:310px;background:#f0f0f0"></div>
<div style="position:absolute;left:464px;top:404px;width:36px;height:258px;background:#efefef"></div>
<div style="position:absolute;left:536px;top:352px;width:1px;height:53px;background:#b8b8c0"></div>
<div style="position:absolute;left:577px;top:352px;width:1px;height:53px;background:#b8b8c0"></div>
<div style="position:absolute;left:636px;top:352px;width:1px;height:53px;background:#b8b8c0"></div>
<div style="position:absolute;left:695px;top:352px;width:1px;height:53px;background:#b8b8c0"></div>
<div style="position:absolute;left:787px;top:352px;width:1px;height:53px;background:#b8b8c0"></div>
<div style="position:absolute;left:828px;top:352px;width:1px;height:53px;background:#b8b8c0"></div>
<div style="position:absolute;left:874px;top:352px;width:1px;height:53px;background:#b8b8c0"></div>
<div style="position:absolute;left:915px;top:352px;width:1px;height:53px;background:#b8b8c0"></div>
<div style="position:absolute;left:945px;top:352px;width:1px;height:53px;background:#b8b8c0"></div>
<div style="position:absolute;left:975px;top:352px;width:1px;height:53px;background:#b8b8c0"></div>
<div style="position:absolute;left:1007px;top:352px;width:1px;height:53px;background:#b8b8c0"></div>
<div style="position:absolute;left:464px;top:404px;width:543px;height:1px;background:#b8b8c0"></div>
<div style="position:absolute;left:499px;top:404px;width:1px;height:258px;background:#b8b8c0"></div>
<div style="position:absolute;left:536px;top:404px;width:1px;height:258px;background:#b8b8c0"></div>
<div style="position:absolute;left:577px;top:404px;width:1px;height:258px;background:#b8b8c0"></div>
<div style="position:absolute;left:636px;top:404px;width:1px;height:258px;background:#b8b8c0"></div>
<div style="position:absolute;left:695px;top:404px;width:1px;height:258px;background:#b8b8c0"></div>
<div style="position:absolute;left:742px;top:404px;width:1px;height:258px;background:#b8b8c0"></div>
<div style="position:absolute;left:787px;top:404px;width:1px;height:258px;background:#b8b8c0"></div>
<div style="position:absolute;left:828px;top:404px;width:1px;height:258px;background:#b8b8c0"></div>
<div style="position:absolute;left:874px;top:404px;width:1px;height:258px;background:#b8b8c0"></div>
<div style="position:absolute;left:915px;top:404px;width:1px;height:258px;background:#b8b8c0"></div>
<div style="position:absolute;left:945px;top:404px;width:1px;height:258px;background:#b8b8c0"></div>
<div style="position:absolute;left:975px;top:404px;width:1px;height:258px;background:#b8b8c0"></div>
<div style="position:absolute;left:1007px;top:404px;width:1px;height:258px;background:#b8b8c0"></div>
<div style="position:absolute;left:464px;top:433px;width:543px;height:1px;background:#b8b8c0"></div>
<div style="position:absolute;left:464px;top:462px;width:543px;height:1px;background:#b8b8c0"></div>
<div style="position:absolute;left:464px;top:491px;width:543px;height:1px;background:#b8b8c0"></div>
<div style="position:absolute;left:464px;top:520px;width:543px;height:1px;background:#b8b8c0"></div>
<div style="position:absolute;left:464px;top:549px;width:543px;height:1px;background:#b8b8c0"></div>
<div style="position:absolute;left:464px;top:578px;width:543px;height:1px;background:#b8b8c0"></div>
<div style="position:absolute;left:464px;top:607px;width:543px;height:1px;background:#b8b8c0"></div>
<div style="position:absolute;left:464px;top:636px;width:543px;height:1px;background:#b8b8c0"></div>
<svg style="position:absolute;left:487px;top:392px" width="10" height="10" viewBox="0 0 10 10"><path d="M10 0V10H0z" fill="#d5d5d5"/></svg>
<div class="t c" style="left:517.5px;top:355px;">Номе</div>
<div class="t c" style="left:517.5px;top:371px;">ра</div>
<div class="t c" style="left:517.5px;top:387px;">хар...</div>
<div class="t c" style="left:556.5px;top:355px;">Цвет</div>
<div class="t c" style="left:556.5px;top:371px;">обозн</div>
<div class="t c" style="left:556.5px;top:387px;">аче...</div>
<div class="t c" style="left:606.5px;top:371px;">X, м</div>
<div class="t c" style="left:665.5px;top:371px;">Y, м</div>
<div class="t c" style="left:718.5px;top:363px;">Радиус,</div>
<div class="t c" style="left:718.5px;top:379px;">м</div>
<div class="t c" style="left:764.5px;top:363px;">Тип</div>
<div class="t c" style="left:764.5px;top:379px;">точки</div>
<div class="t c" style="left:808px;top:363px;">Цвет</div>
<div class="t c" style="left:808px;top:379px;">точки</div>
<div class="t c" style="left:851px;top:363px;">Тип</div>
<div class="t c" style="left:851px;top:379px;">линии</div>
<div class="t c" style="left:895px;top:363px;">Цвет</div>
<div class="t c" style="left:895px;top:379px;">линии</div>
<div class="t c" style="left:930px;top:363px;">Кур</div>
<div class="t c" style="left:930px;top:379px;">сив</div>
<div class="t c" style="left:960.5px;top:355px;">Под</div>
<div class="t c" style="left:960.5px;top:371px;">чер</div>
<div class="t c" style="left:960.5px;top:387px;">ки...</div>
<div class="t c" style="left:991px;top:355px;">При</div>
<div class="t c" style="left:991px;top:371px;">меч</div>
<div class="t c" style="left:991px;top:387px;">ание</div>
<div style="position:absolute;left:0;top:0;width:1082px;height:662px;overflow:hidden">
<div class="t " style="left:467px;top:412px;">1</div>
<div style="position:absolute;left:543px;top:408px;width:23px;height:23px;background:#000"></div>
<div class="t " style="left:581px;top:412px;letter-spacing:-0.34px">466963....</div>
<div class="t " style="left:640px;top:412px;letter-spacing:-0.3px">217833...</div>
<div class="t " style="left:786px;top:412px;transform:translateX(-100%)">нет</div>
<div style="position:absolute;left:794px;top:408px;width:23px;height:23px;background:#000"></div>
<div class="t " style="left:820px;top:412px;">ч</div>
<div style="position:absolute;left:833px;top:418px;width:25px;height:2px;background:#777"></div>
<div class="t " style="left:862px;top:412px;">сп</div>
<div style="position:absolute;left:881px;top:408px;width:23px;height:23px;background:#000"></div>
<div class="t " style="left:907px;top:412px;">ч</div>
<div class="t " style="left:467px;top:441px;">2</div>
<div style="position:absolute;left:543px;top:437px;width:23px;height:23px;background:#000"></div>
<div class="t " style="left:581px;top:441px;letter-spacing:-0.34px">466965....</div>
<div class="t " style="left:640px;top:441px;letter-spacing:-0.3px">217834...</div>
<div class="t " style="left:786px;top:441px;transform:translateX(-100%)">нет</div>
<div style="position:absolute;left:794px;top:437px;width:23px;height:23px;background:#000"></div>
<div class="t " style="left:820px;top:441px;">ч</div>
<div style="position:absolute;left:833px;top:447px;width:25px;height:2px;background:#777"></div>
<div class="t " style="left:862px;top:441px;">сп</div>
<div style="position:absolute;left:881px;top:437px;width:23px;height:23px;background:#000"></div>
<div class="t " style="left:907px;top:441px;">ч</div>
<div class="t " style="left:467px;top:470px;">3</div>
<div style="position:absolute;left:543px;top:466px;width:23px;height:23px;background:#000"></div>
<div class="t " style="left:581px;top:470px;letter-spacing:-0.34px">466926....</div>
<div class="t " style="left:640px;top:470px;letter-spacing:-0.3px">217835...</div>
<div class="t " style="left:786px;top:470px;transform:translateX(-100%)">нет</div>
<div style="position:absolute;left:794px;top:466px;width:23px;height:23px;background:#000"></div>
<div class="t " style="left:820px;top:470px;">ч</div>
<div style="position:absolute;left:833px;top:476px;width:25px;height:2px;background:#777"></div>
<div class="t " style="left:862px;top:470px;">сп</div>
<div style="position:absolute;left:881px;top:466px;width:23px;height:23px;background:#000"></div>
<div class="t " style="left:907px;top:470px;">ч</div>
<div class="t " style="left:467px;top:499px;">4</div>
<div style="position:absolute;left:543px;top:495px;width:23px;height:23px;background:#000"></div>
<div class="t " style="left:581px;top:499px;letter-spacing:-0.34px">466903....</div>
<div class="t " style="left:640px;top:499px;letter-spacing:-0.3px">217836...</div>
<div class="t " style="left:786px;top:499px;transform:translateX(-100%)">нет</div>
<div style="position:absolute;left:794px;top:495px;width:23px;height:23px;background:#000"></div>
<div class="t " style="left:820px;top:499px;">ч</div>
<div style="position:absolute;left:833px;top:505px;width:25px;height:2px;background:#777"></div>
<div class="t " style="left:862px;top:499px;">сп</div>
<div style="position:absolute;left:881px;top:495px;width:23px;height:23px;background:#000"></div>
<div class="t " style="left:907px;top:499px;">ч</div>
<div class="t " style="left:467px;top:528px;">5</div>
<div style="position:absolute;left:543px;top:524px;width:23px;height:23px;background:#000"></div>
<div class="t " style="left:581px;top:528px;letter-spacing:-0.34px">466880....</div>
<div class="t " style="left:640px;top:528px;letter-spacing:-0.3px">217837...</div>
<div class="t " style="left:786px;top:528px;transform:translateX(-100%)">нет</div>
<div style="position:absolute;left:794px;top:524px;width:23px;height:23px;background:#000"></div>
<div class="t " style="left:820px;top:528px;">ч</div>
<div style="position:absolute;left:833px;top:534px;width:25px;height:2px;background:#777"></div>
<div class="t " style="left:862px;top:528px;">сп</div>
<div style="position:absolute;left:881px;top:524px;width:23px;height:23px;background:#000"></div>
<div class="t " style="left:907px;top:528px;">ч</div>
<div class="t " style="left:467px;top:557px;">6</div>
<div style="position:absolute;left:543px;top:553px;width:23px;height:23px;background:#000"></div>
<div class="t " style="left:581px;top:557px;letter-spacing:-0.34px">466879....</div>
<div class="t " style="left:640px;top:557px;letter-spacing:-0.3px">217837...</div>
<div class="t " style="left:786px;top:557px;transform:translateX(-100%)">нет</div>
<div style="position:absolute;left:794px;top:553px;width:23px;height:23px;background:#000"></div>
<div class="t " style="left:820px;top:557px;">ч</div>
<div style="position:absolute;left:833px;top:563px;width:25px;height:2px;background:#777"></div>
<div class="t " style="left:862px;top:557px;">сп</div>
<div style="position:absolute;left:881px;top:553px;width:23px;height:23px;background:#000"></div>
<div class="t " style="left:907px;top:557px;">ч</div>
<div class="t " style="left:467px;top:586px;">7</div>
<div style="position:absolute;left:543px;top:582px;width:23px;height:23px;background:#000"></div>
<div class="t " style="left:581px;top:586px;letter-spacing:-0.34px">466900....</div>
<div class="t " style="left:640px;top:586px;letter-spacing:-0.3px">217836...</div>
<div class="t " style="left:786px;top:586px;transform:translateX(-100%)">нет</div>
<div style="position:absolute;left:794px;top:582px;width:23px;height:23px;background:#000"></div>
<div class="t " style="left:820px;top:586px;">ч</div>
<div style="position:absolute;left:833px;top:592px;width:25px;height:2px;background:#777"></div>
<div class="t " style="left:862px;top:586px;">сп</div>
<div style="position:absolute;left:881px;top:582px;width:23px;height:23px;background:#000"></div>
<div class="t " style="left:907px;top:586px;">ч</div>
<div class="t " style="left:467px;top:615px;">8</div>
<div style="position:absolute;left:543px;top:611px;width:23px;height:23px;background:#000"></div>
<div class="t " style="left:581px;top:615px;letter-spacing:-0.34px">466902....</div>
<div class="t " style="left:640px;top:615px;letter-spacing:-0.3px">217836...</div>
<div class="t " style="left:786px;top:615px;transform:translateX(-100%)">нет</div>
<div style="position:absolute;left:794px;top:611px;width:23px;height:23px;background:#000"></div>
<div class="t " style="left:820px;top:615px;">ч</div>
<div style="position:absolute;left:833px;top:621px;width:25px;height:2px;background:#777"></div>
<div class="t " style="left:862px;top:615px;">сп</div>
<div style="position:absolute;left:881px;top:611px;width:23px;height:23px;background:#000"></div>
<div class="t " style="left:907px;top:615px;">ч</div>
<div class="t " style="left:467px;top:644px;">9</div>
<div style="position:absolute;left:543px;top:640px;width:23px;height:23px;background:#000"></div>
<div class="t " style="left:581px;top:644px;letter-spacing:-0.34px">466963....</div>
<div class="t " style="left:640px;top:644px;letter-spacing:-0.3px">217833...</div>
<div class="t " style="left:786px;top:644px;transform:translateX(-100%)">нет</div>
<div style="position:absolute;left:794px;top:640px;width:23px;height:23px;background:#000"></div>
<div class="t " style="left:820px;top:644px;">ч</div>
<div style="position:absolute;left:833px;top:650px;width:25px;height:2px;background:#777"></div>
<div class="t " style="left:862px;top:644px;">сп</div>
<div style="position:absolute;left:881px;top:640px;width:23px;height:23px;background:#000"></div>
<div class="t " style="left:907px;top:644px;">ч</div>
</div>
<svg style="position:absolute;left:1013px;top:410px" width="9" height="9" viewBox="0 0 9 9"><path d="M4.5 0L9 8.5H0z" fill="#d6d6d6"/></svg>
<div style="position:absolute;left:1013px;top:423px;width:9px;height:196px;background:#d6d6d6"></div>
<svg style="position:absolute;left:1013px;top:649px" width="9" height="9" viewBox="0 0 9 9"><path d="M0 0H9L4.5 8.5z" fill="#d6d6d6"/></svg>
<div class="t b" style="left:127px;top:680px;font-size:12px">Дополнительные соединения между точками</div>
<div style="position:absolute;left:435px;top:666px;width:5px;height:30px;background:#e6e6e6"></div>
<div style="position:absolute;left:445px;top:678px;width:582px;height:1px;background:#a6a6ae"></div>
<div class="t " style="left:9px;top:701px;color:#fff">Автосохранение выполнено успешно.</div>
</body></html>
